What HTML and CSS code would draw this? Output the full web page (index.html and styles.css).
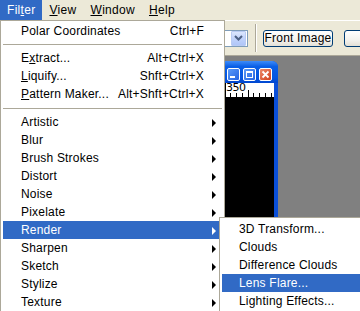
FILE: index.html
```html
<!DOCTYPE html>
<html>
	<head>
		<meta charset="UTF-8">
		<title>Filter menu</title>
		<link rel="stylesheet" href="styles.css">
	</head>
	<body>
		<div class="screen">
			<!--菜单栏-->
			<div class="menubar">
				<span class="mb-item active">Fil<u>t</u>er</span>
				<span class="mb-item"><u>V</u>iew</span>
				<span class="mb-item"><u>W</u>indow</span>
				<span class="mb-item"><u>H</u>elp</span>
			</div>
			<!--选项栏-->
			<div class="options">
				<div class="combo">
					<span class="combo-field"></span>
					<span class="combo-btn">
						<svg width="9" height="6" viewBox="0 0 9 6"><polyline points="1,1 4.5,4.5 8,1" fill="none" stroke="#4d6185" stroke-width="2"/></svg>
					</span>
				</div>
				<span class="tb-sep"></span>
				<span class="xp-btn">Front Image</span>
				<!--第二个按钮的文字在画面之外-->
				<span class="xp-btn"></span>
			</div>
			<!--工作区-->
			<div class="workspace">
				<div class="docwin">
					<div class="titlebar">
						<span class="tbtn">
							<svg width="11" height="11" viewBox="0 0 11 11"><rect x="2" y="7" width="5" height="2" fill="#fff"/></svg>
						</span>
						<span class="tbtn">
							<svg width="11" height="11" viewBox="0 0 11 11"><rect x="2.5" y="2.5" width="6" height="6" fill="none" stroke="#fff"/><rect x="2" y="2" width="7" height="2" fill="#fff"/></svg>
						</span>
						<span class="tbtn close">
							<svg width="11" height="11" viewBox="0 0 11 11"><path d="M2.5 2.5 L8.5 8.5 M8.5 2.5 L2.5 8.5" stroke="#fff" stroke-width="1.8"/></svg>
						</span>
					</div>
					<div class="docbody">
						<div class="ruler">
							<span class="ruler-num">350</span>
							<svg class="ticks" width="120" height="14" viewBox="0 0 120 14">
								<line x1="71.5" y1="0" x2="71.5" y2="14" stroke="#000"/>
								<line x1="76.5" y1="10" x2="76.5" y2="14" stroke="#000"/>
								<line x1="82.5" y1="10" x2="82.5" y2="14" stroke="#000"/>
								<line x1="88.5" y1="10" x2="88.5" y2="14" stroke="#000"/>
								<line x1="94.5" y1="7" x2="94.5" y2="14" stroke="#000"/>
								<line x1="99.5" y1="10" x2="99.5" y2="14" stroke="#000"/>
								<line x1="105.5" y1="10" x2="105.5" y2="14" stroke="#000"/>
								<line x1="111.5" y1="10" x2="111.5" y2="14" stroke="#000"/>
								<line x1="117.5" y1="10" x2="117.5" y2="14" stroke="#000"/>
							</svg>
						</div>
						<div class="canvas"></div>
					</div>
				</div>
			</div>

			<!--Filter下拉菜单-->
			<div class="menu">
				<div class="item"><span>Polar Coordinates</span><span class="key">Ctrl+F</span></div>
				<div class="sep"></div>
				<div class="item"><span>E<u>x</u>tract...</span><span class="key">Alt+Ctrl+X</span></div>
				<div class="item"><span><u>L</u>iquify...</span><span class="key">Shft+Ctrl+X</span></div>
				<div class="item"><span><u>P</u>attern Maker...</span><span class="key">Alt+Shft+Ctrl+X</span></div>
				<div class="sep wide"></div>
				<div class="item sub">Artistic</div>
				<div class="item sub">Blur</div>
				<div class="item sub">Brush Strokes</div>
				<div class="item sub">Distort</div>
				<div class="item sub">Noise</div>
				<div class="item sub">Pixelate</div>
				<div class="item sub hot">Render</div>
				<div class="item sub">Sharpen</div>
				<div class="item sub">Sketch</div>
				<div class="item sub">Stylize</div>
				<div class="item sub">Texture</div>
			</div>

			<!--Render子菜单-->
			<div class="submenu">
				<div class="item">3D Transform...</div>
				<div class="item">Clouds</div>
				<div class="item">Difference Clouds</div>
				<div class="item hot">Lens Flare...</div>
				<div class="item">Lighting Effects...</div>
			</div>
		</div>
	</body>
</html>
```

FILE: styles.css
```css
*{
	margin: 0;
	padding: 0;
	box-sizing: border-box;
}
body{
	width: 360px;
	height: 311px;
	overflow: hidden;
	font: 12px "Liberation Sans", Arial, sans-serif;
	color: #000;
}
.screen{
	position: relative;
	width: 360px;
	height: 311px;
	display: flex;
	flex-direction: column;
	background-color: #808080;
	overflow: hidden;
}
/*菜单栏*/
.menubar{
	display: flex;
	height: 20px;
	flex-shrink: 0;
	background-color: #ece9d8;
}
.mb-item{
	padding: 0 7px;
	line-height: 20px;
	font-weight: normal;
	letter-spacing: 0.3px;
}
.mb-item.active{
	background-color: #316ac5;
	color: #fff;
}
/*选项栏*/
.options{
	display: flex;
	align-items: center;
	flex-shrink: 0;
	height: 36px;
	padding-left: 150px;
	background-color: #ece9d8;
	border-top: 1px solid #fff;
	border-bottom: 1px solid #aca899;
	overflow: hidden;
}
.options > *{
	flex-shrink: 0;
}
.combo{
	display: flex;
	align-items: center;
	width: 98px;
	height: 17px;
	padding: 1px;
	background-color: #fff;
	border: 1px solid #7f9db9;
}
.combo-field{
	flex: 1;
}
.combo-btn{
	display: flex;
	align-items: center;
	justify-content: center;
	width: 15px;
	height: 15px;
	border: 1px solid #b9cbf3;
	border-radius: 1px;
	background: linear-gradient(#dbe6fd, #c1d3fb 50%, #b0c6f8);
}
.tb-sep{
	width: 2px;
	height: 28px;
	margin-left: 7px;
	border-left: 1px solid #aca899;
	border-right: 1px solid #fff;
}
.xp-btn{
	width: 70px;
	height: 17px;
	margin-left: 6px;
	line-height: 15px;
	text-align: center;
	border: 1px solid #003c74;
	border-radius: 3px;
	background: linear-gradient(#fff, #f3f2ee 60%, #e3e0d6);
	letter-spacing: 0.2px;
}
.xp-btn + .xp-btn{
	margin-left: 11px;
}
/*工作区*/
.workspace{
	position: relative;
	flex: 1;
	background-color: #808080;
}
.docwin{
	position: absolute;
	left: 150px;
	top: 5px;
	width: 128px;
	height: 300px;
	display: flex;
	flex-direction: column;
	background-color: #0a4fd8;
	border-radius: 6px 6px 0 0;
}
.titlebar{
	display: flex;
	justify-content: flex-end;
	gap: 3px;
	height: 22px;
	padding: 7px 6px 0 0;
	border-radius: 6px 6px 0 0;
	background: linear-gradient(#3e8cf9, #0a5fe6 25%, #0455e0 75%, #0047d0);
}
.tbtn{
	display: flex;
	align-items: center;
	justify-content: center;
	width: 13px;
	height: 13px;
	border: 1px solid #fff;
	border-radius: 2px;
	background: linear-gradient(135deg, #5a9af9, #2463e2);
}
.tbtn.close{
	background: linear-gradient(135deg, #ec8a6c, #d2401c);
}
.docbody{
	flex: 1;
	display: flex;
	flex-direction: column;
	margin: 0 4px;
	background-color: #000;
}
.ruler{
	position: relative;
	height: 14px;
	background-color: #fff;
}
.ruler-num{
	position: absolute;
	left: 72px;
	top: 0;
	font-size: 11px;
	line-height: 10px;
	font-family: "DejaVu Sans", sans-serif;
	letter-spacing: -0.5px;
}
.ticks{
	display: block;
}
.canvas{
	flex: 1;
	background-color: #000;
}
/*下拉菜单*/
.menu, .submenu{
	position: absolute;
	background-color: #fff;
	border: 1px solid #aca899;
	letter-spacing: 0.2px;
}
.menu{
	left: 0;
	top: 20px;
	width: 225px;
	height: 300px;
	padding: 1px 2px;
}
.submenu{
	left: 219px;
	top: 217px;
	width: 170px;
	padding: 2px;
}
.item{
	position: relative;
	display: flex;
	justify-content: space-between;
	height: 18px;
	line-height: 18px;
	padding: 0 18px 0 18px;
	white-space: nowrap;
}
.submenu .item{
	padding-left: 17px;
}
.item.hot{
	background-color: #316ac5;
	color: #fff;
}
/*子菜单箭头*/
.item.sub::after{
	content: "";
	position: absolute;
	right: 6px;
	top: 6px;
	border-left: 4px solid #000;
	border-top: 4px solid transparent;
	border-bottom: 4px solid transparent;
}
.item.hot.sub::after{
	border-left-color: #fff;
}
.sep{
	height: 9px;
	padding-top: 4px;
}
.sep.wide{
	height: 10px;
	padding-top: 5px;
}
.sep::before{
	content: "";
	display: block;
	height: 1px;
	background-color: #aca899;
}
```
